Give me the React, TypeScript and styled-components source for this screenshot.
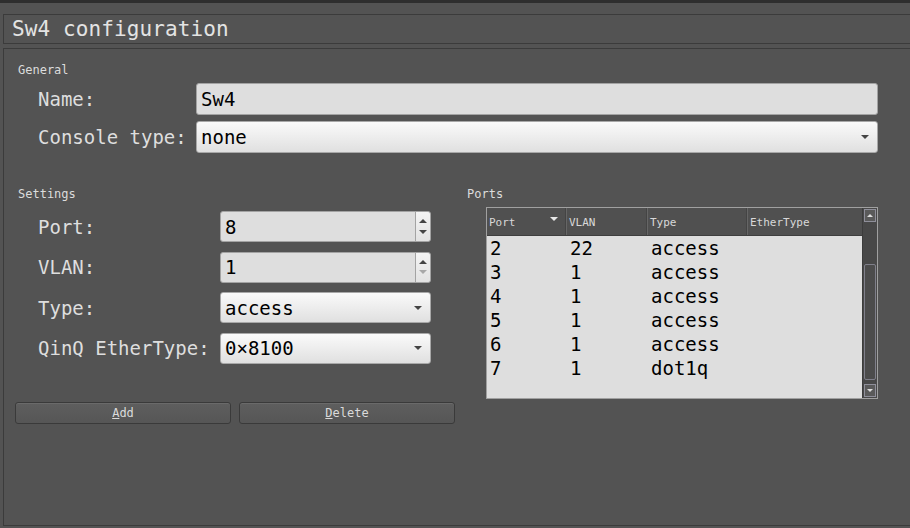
import React from "react";
import styled, { createGlobalStyle } from "styled-components";

const mono = `"DejaVu Sans Mono", "Liberation Mono", monospace`;

const Global = createGlobalStyle`
  html, body { margin: 0; padding: 0; background: #535353; }
  body { width: 910px; height: 528px; overflow: hidden; font-family: ${mono}; }
`;

const Page = styled.div`
  width: 910px;
  height: 528px;
  background: #535353;
  display: flex;
  flex-direction: column;
`;

const TopBar = styled.div`
  height: 3px;
  background: #2e2e2e;
  flex: none;
`;

const Body = styled.div`
  flex: 1;
  display: flex;
  flex-direction: column;
  padding: 11px 0 2px 3px;
  gap: 4px;
`;

const TitleBox = styled.div`
  height: 28px;
  border: 1px solid #3b3b3b;
  border-right: none;
  display: flex;
  align-items: center;
  padding-left: 8px;
  font-size: 21px;
  color: #e3e3e3;
  letter-spacing: 0.1px;
`;

const MainFrame = styled.div`
  flex: 1;
  border: 1px solid #3b3b3b;
  border-right: none;
  display: flex;
  flex-direction: column;
  padding: 14px 0 0 14px;
`;

const GroupLabel = styled.div`
  font-size: 12px;
  color: #dcdcdc;
  height: 14px;
  line-height: 14px;
`;

const GeneralGrid = styled.div`
  display: grid;
  grid-template-columns: 158px 682px;
  row-gap: 6px;
  margin-top: 6px;
  padding-left: 20px;
  align-items: center;
`;

const FieldLabel = styled.label`
  font-size: 19px;
  color: #dedede;
  white-space: nowrap;
`;

const TextInput = styled.div<{ $h?: number }>`
  height: ${(p) => p.$h ?? 30}px;
  box-sizing: border-box;
  background: #dedede;
  border: 1px solid #a3a3a3;
  border-radius: 3px;
  display: flex;
  align-items: center;
  padding-left: 4px;
  font-size: 19px;
  color: #000;
`;

const SelectBox = styled.div<{ $h?: number }>`
  height: ${(p) => p.$h ?? 32}px;
  box-sizing: border-box;
  background: linear-gradient(#fafafa, #e0e0e0);
  border: 1px solid #a8a8a8;
  border-radius: 3px;
  display: flex;
  align-items: center;
  justify-content: space-between;
  padding: 0 8px 0 4px;
  font-size: 19px;
  color: #000;
`;

const Arrow = styled.span<{ $up?: boolean; $disabled?: boolean }>`
  width: 0;
  height: 0;
  border-left: 4px solid transparent;
  border-right: 4px solid transparent;
  ${(p) =>
    p.$up
      ? `border-bottom: 4px solid ${p.$disabled ? "#a8a8a8" : "#444"};`
      : `border-top: 4px solid ${p.$disabled ? "#a8a8a8" : "#444"};`}
`;

const Columns = styled.div`
  display: flex;
  margin-top: 34px;
`;

const LeftCol = styled.div`
  width: 441px;
  display: flex;
  flex-direction: column;
`;

const RightCol = styled.div`
  margin-left: 8px;
  display: flex;
  flex-direction: column;
`;

const SettingsGrid = styled.div`
  display: grid;
  grid-template-columns: 182px 211px;
  row-gap: 9.5px;
  margin-top: 10px;
  padding-left: 20px;
  align-items: center;
`;

const Spin = styled.div`
  height: 31px;
  box-sizing: border-box;
  background: #dedede;
  border: 1px solid #a3a3a3;
  border-radius: 3px;
  display: flex;
  font-size: 19px;
  color: #000;
`;

const SpinText = styled.div`
  flex: 1;
  display: flex;
  align-items: center;
  padding-left: 4px;
`;

const SpinButtons = styled.div`
  width: 14px;
  border-left: 1px solid #a3a3a3;
  display: flex;
  flex-direction: column;
  align-items: center;
  justify-content: space-around;
  padding: 4px 0;
  background: linear-gradient(#f4f4f4, #e2e2e2);
  border-radius: 0 3px 3px 0;
`;

const ButtonRow = styled.div`
  display: flex;
  gap: 8px;
  margin-top: 38px;
  margin-left: -3px;
`;

const Button = styled.button`
  width: 216px;
  height: 22px;
  box-sizing: border-box;
  background: linear-gradient(#5e5e5e, #565656);
  border: 1px solid #3a3a3a;
  border-radius: 3px;
  box-shadow: inset 0 1px 0 #6a6a6a;
  color: #dadada;
  font-family: ${mono};
  font-size: 12px;
  padding: 0;
  u { text-decoration: underline; }
`;

const Table = styled.div`
  margin-top: 6px;
  margin-left: 19px;
  width: 392px;
  height: 192px;
  box-sizing: border-box;
  border: 1px solid #a0a0a0;
  display: flex;
  background: #dedede;
`;

const TableMain = styled.div`
  flex: 1;
  display: flex;
  flex-direction: column;
`;

const HeaderRow = styled.div`
  display: grid;
  grid-template-columns: 80px 81px 100px 1fr;
  height: 27px;
  background: #505050;
  border-bottom: 1px solid #3e3e3e;
`;

const HeaderCell = styled.div`
  display: flex;
  align-items: center;
  justify-content: space-between;
  padding: 2px 8px 0 2px;
  font-size: 11px;
  color: #d8d8d8;
  border-right: 1px solid #666;
  box-shadow: inset -1px 0 0 #444;
  &:last-child { border-right: none; box-shadow: none; }
`;

const SortArrow = styled.span`
  width: 0;
  height: 0;
  border-left: 4px solid transparent;
  border-right: 4px solid transparent;
  border-top: 4px solid #e8e8e8;
  margin-top: -8px;
`;

const Row = styled.div`
  display: grid;
  grid-template-columns: 80px 81px 100px 1fr;
  height: 24px;
  align-items: center;
  font-size: 19px;
  color: #000;
`;

const Cell = styled.div`
  padding-left: 3px;
  white-space: nowrap;
`;

const ScrollBar = styled.div`
  width: 14px;
  background: #484848;
  display: flex;
  flex-direction: column;
  border-left: 1px solid #3c3c3c;
`;

const ScrollBtn = styled.div`
  height: 13px;
  box-sizing: border-box;
  margin: 1px;
  border: 1px solid #8f8f9a;
  background: #5a5a5a;
  display: flex;
  align-items: center;
  justify-content: center;
`;

const ScrollTrack = styled.div`
  flex: 1;
  display: flex;
  flex-direction: column;
  padding: 41px 0 3px;
`;

const ScrollHandle = styled.div`
  flex: 1;
  margin: 0 1px;
  border: 1px solid #7f7f8a;
  border-radius: 2px;
  background: #4c4c4c;
`;

const ScrollArrow = styled.span<{ $up?: boolean }>`
  width: 0;
  height: 0;
  border-left: 3px solid transparent;
  border-right: 3px solid transparent;
  ${(p) => (p.$up ? `border-bottom: 3px solid #ddd;` : `border-top: 3px solid #ddd;`)}
`;

const rows = [
  ["2", "22", "access"],
  ["3", "1", "access"],
  ["4", "1", "access"],
  ["5", "1", "access"],
  ["6", "1", "access"],
  ["7", "1", "dot1q"],
];

export default function App() {
  return (
    <Page>
      <Global />
      <TopBar />
      <Body>
        <TitleBox>Sw4 configuration</TitleBox>
        <MainFrame>
          <GroupLabel>General</GroupLabel>
          <GeneralGrid>
            <FieldLabel>Name:</FieldLabel>
            <TextInput $h={32}>Sw4</TextInput>
            <FieldLabel>Console type:</FieldLabel>
            <SelectBox>
              <span>none</span>
              <Arrow />
            </SelectBox>
          </GeneralGrid>
          <Columns>
            <LeftCol>
              <GroupLabel>Settings</GroupLabel>
              <SettingsGrid>
                <FieldLabel>Port:</FieldLabel>
                <Spin>
                  <SpinText>8</SpinText>
                  <SpinButtons>
                    <Arrow $up />
                    <Arrow />
                  </SpinButtons>
                </Spin>
                <FieldLabel>VLAN:</FieldLabel>
                <Spin>
                  <SpinText>1</SpinText>
                  <SpinButtons>
                    <Arrow $up />
                    <Arrow $disabled />
                  </SpinButtons>
                </Spin>
                <FieldLabel>Type:</FieldLabel>
                <SelectBox $h={31}>
                  <span>access</span>
                  <Arrow />
                </SelectBox>
                <FieldLabel>QinQ EtherType:</FieldLabel>
                <SelectBox $h={31}>
                  <span>0×8100</span>
                  <Arrow />
                </SelectBox>
              </SettingsGrid>
              <ButtonRow>
                <Button>
                  <u>A</u>dd
                </Button>
                <Button>
                  <u>D</u>elete
                </Button>
              </ButtonRow>
            </LeftCol>
            <RightCol>
              <GroupLabel>Ports</GroupLabel>
              <Table>
                <TableMain>
                  <HeaderRow>
                    <HeaderCell>
                      Port <SortArrow />
                    </HeaderCell>
                    <HeaderCell>VLAN</HeaderCell>
                    <HeaderCell>Type</HeaderCell>
                    <HeaderCell>EtherType</HeaderCell>
                  </HeaderRow>
                  {rows.map((r) => (
                    <Row key={r[0]}>
                      <Cell>{r[0]}</Cell>
                      <Cell>{r[1]}</Cell>
                      <Cell>{r[2]}</Cell>
                      <Cell />
                    </Row>
                  ))}
                </TableMain>
                <ScrollBar>
                  <ScrollBtn>
                    <ScrollArrow $up />
                  </ScrollBtn>
                  <ScrollTrack>
                    <ScrollHandle />
                  </ScrollTrack>
                  <ScrollBtn>
                    <ScrollArrow />
                  </ScrollBtn>
                </ScrollBar>
              </Table>
            </RightCol>
          </Columns>
        </MainFrame>
      </Body>
    </Page>
  );
}
